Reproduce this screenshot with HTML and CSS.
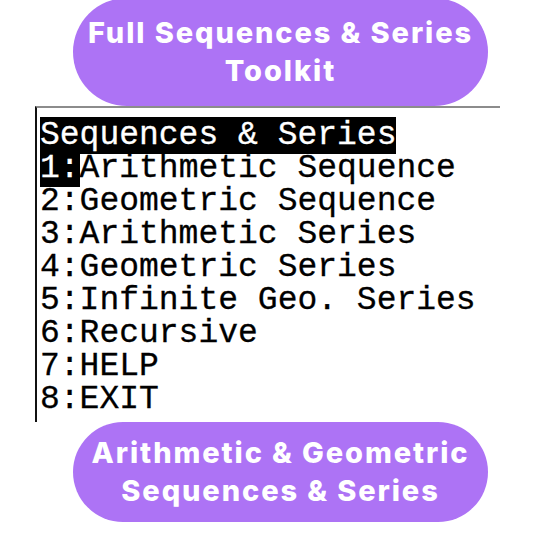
FILE: index.html
```html
<!DOCTYPE html>
<html lang="en">
<head>
    <meta charset="UTF-8">
    <meta name="viewport" content="width=device-width, initial-scale=1.0">
    <title>Sequences &amp; Series Toolkit</title>
    <link rel="stylesheet" href="styles.css">
</head>
<body>
    <div class="pill pill-top">
        <span>Full Sequences &amp; Series</span>
        <span>Toolkit</span>
    </div>

    <div class="screen">
        <div class="row"><span class="inv">Sequences &amp; Series</span></div>
        <div class="row"><span class="inv">1:</span>Arithmetic Sequence</div>
        <div class="row">2:Geometric Sequence</div>
        <div class="row">3:Arithmetic Series</div>
        <div class="row">4:Geometric Series</div>
        <div class="row">5:Infinite Geo. Series</div>
        <div class="row">6:Recursive</div>
        <div class="row">7:HELP</div>
        <div class="row">8:EXIT</div>
    </div>

    <div class="pill pill-bottom">
        <span>Arithmetic &amp; Geometric</span>
        <span>Sequences &amp; Series</span>
    </div>
</body>
</html>
```

FILE: styles.css
```css
body {
    margin: 0;
    padding: 0;
    background-color: #ffffff;
    width: 533px;
    height: 533px;
    overflow: hidden;
}

.pill {
    width: 415px;
    margin-left: 73px;
    background-color: #ad73f5;
    color: #ffffff;
    font-family: Inter, "Open Sans", sans-serif;
    font-weight: 800;
    font-size: 29px;
    line-height: 38px;
    display: flex;
    flex-direction: column;
    align-items: center;
    justify-content: center;
    letter-spacing: 1.9px;
}

.pill-top {
    height: 108px;
    margin-top: -2px;
    border-radius: 54px;
}

.pill-bottom {
    height: 100px;
    border-radius: 50px;
}

/* calculator menu */
.screen {
    width: 460px;
    height: 303px;
    margin-left: 35px;
    padding: 11px 0 0 3px;
    border-top: 2px solid #8c8c8c;
    border-left: 2px solid #111111;
    font-family: "Liberation Mono", monospace;
    font-size: 33px;
    color: #000000;
    -webkit-text-stroke: 0.3px;
}

.row {
    height: 33px;
    line-height: 33px;
    white-space: pre;
}

.inv {
    background-color: #000000;
    color: #ffffff;
}
```
